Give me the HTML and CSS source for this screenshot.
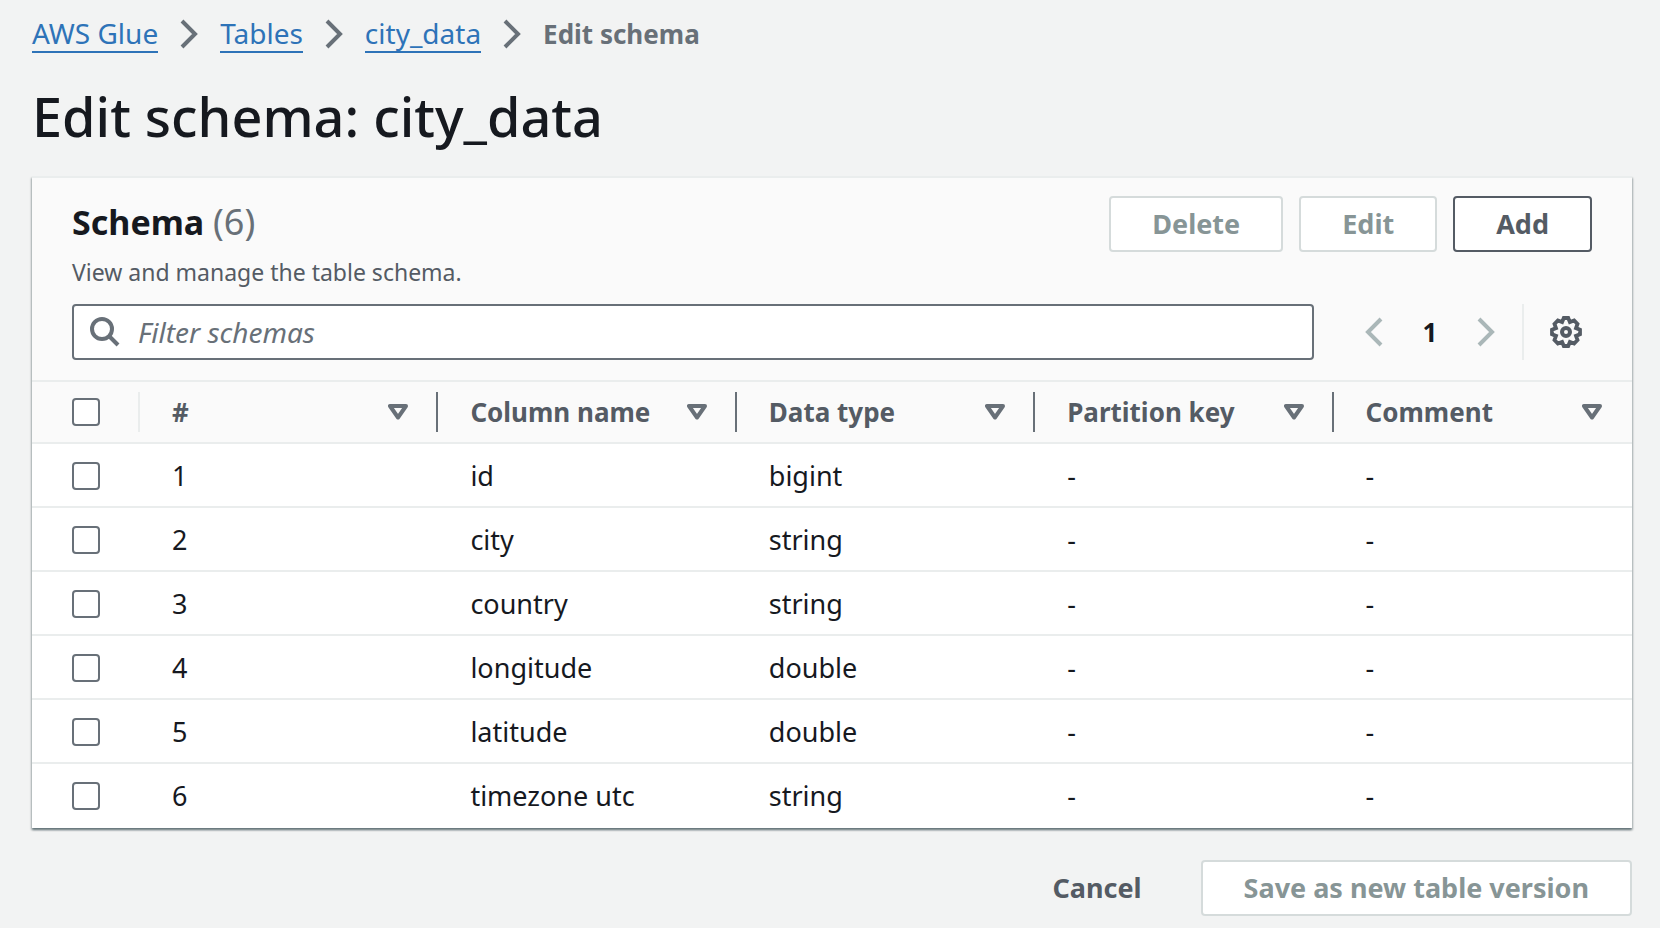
FILE: index.html
```
<!DOCTYPE html>
<html lang="en">
<head>
<meta charset="utf-8">
<title>Edit schema: city_data</title>
<link rel="stylesheet" href="styles.css">
</head>
<body>
<svg class="sprite" aria-hidden="true">
  <symbol id="chevron" viewBox="0 0 18 30"><path d="M2 2 15 15 2 28" fill="none" stroke="currentColor" stroke-width="4"/></symbol>
  <symbol id="sort" viewBox="0 0 20 16"><path d="M2 2H18L10 13.500Z" fill="none" stroke="currentColor" stroke-width="4" stroke-linejoin="round"/></symbol>
</svg>
<main class="page">
  <nav class="breadcrumbs" aria-label="Breadcrumbs">
    <a href="#">AWS Glue</a>
    <svg class="chevron"><use href="#chevron"/></svg>
    <a href="#">Tables</a>
    <svg class="chevron"><use href="#chevron"/></svg>
    <a href="#">city_data</a>
    <svg class="chevron"><use href="#chevron"/></svg>
    <span class="current">Edit schema</span>
  </nav>
  <h1 class="title">Edit schema: city_data</h1>

  <section class="panel">
    <header class="panel-header">
      <div class="heading-row">
        <div>
          <h2 class="heading">Schema <span class="count">(6)</span></h2>
          <p class="description">View and manage the table schema.</p>
        </div>
        <div class="actions">
          <button class="button" disabled>Delete</button>
          <button class="button" disabled>Edit</button>
          <button class="button">Add</button>
        </div>
      </div>
      <div class="tools">
        <label class="search">
          <svg class="search-icon" viewBox="0 0 30 30"><g fill="none" stroke="currentColor" stroke-width="4"><circle cx="12" cy="12" r="10"/><path d="M19 19 28 28"/></g></svg>
          <input type="text" placeholder="Filter schemas" aria-label="Filter schemas">
        </label>
        <div class="pagination">
          <button class="icon-button" disabled aria-label="Previous page"><svg class="chevron back"><use href="#chevron"/></svg></button>
          <button class="page-number">1</button>
          <button class="icon-button" disabled aria-label="Next page"><svg class="chevron"><use href="#chevron"/></svg></button>
        </div>
        <button class="settings" aria-label="Settings">
          <svg class="gear" viewBox="0 0 32 32"><g fill="none" stroke="currentColor" stroke-width="4"><circle cx="16" cy="16" r="4"/><path stroke-width="3.800" d="M13.800 2h4.400l1.700 4 4.200-1.500 3.400 3.400-1.500 4.200 4 1.700v4.400l-4 1.700 1.500 4.200-3.400 3.400-4.200-1.500-1.700 4h-4.400l-1.700-4-4.200 1.500-3.400-3.400 1.500-4.200-4-1.700v-4.400l4-1.700-1.500-4.200 3.400-3.400 4.200 1.500z"/></g></svg>
        </button>
      </div>
    </header>
    <table class="schema">
      <thead>
        <tr>
          <th class="select"><input type="checkbox" aria-label="Select all"></th>
          <th><div class="head">#<svg class="sort"><use href="#sort"/></svg></div></th>
          <th><div class="head">Column name<svg class="sort"><use href="#sort"/></svg></div></th>
          <th><div class="head">Data type<svg class="sort"><use href="#sort"/></svg></div></th>
          <th><div class="head">Partition key<svg class="sort"><use href="#sort"/></svg></div></th>
          <th><div class="head">Comment<svg class="sort"><use href="#sort"/></svg></div></th>
        </tr>
      </thead>
      <tbody>
        <tr><td class="select"><input type="checkbox" aria-label="Select id"></td><td>1</td><td>id</td><td>bigint</td><td>-</td><td>-</td></tr>
        <tr><td class="select"><input type="checkbox" aria-label="Select city"></td><td>2</td><td>city</td><td>string</td><td>-</td><td>-</td></tr>
        <tr><td class="select"><input type="checkbox" aria-label="Select country"></td><td>3</td><td>country</td><td>string</td><td>-</td><td>-</td></tr>
        <tr><td class="select"><input type="checkbox" aria-label="Select longitude"></td><td>4</td><td>longitude</td><td>double</td><td>-</td><td>-</td></tr>
        <tr><td class="select"><input type="checkbox" aria-label="Select latitude"></td><td>5</td><td>latitude</td><td>double</td><td>-</td><td>-</td></tr>
        <tr><td class="select"><input type="checkbox" aria-label="Select timezone utc"></td><td>6</td><td>timezone utc</td><td>string</td><td>-</td><td>-</td></tr>
      </tbody>
    </table>
  </section>

  <footer class="footer">
    <button class="button link">Cancel</button>
    <button class="button" disabled>Save as new table version</button>
  </footer>
</main>
</body>
</html>
```

FILE: styles.css
```
* { box-sizing: border-box; }
body {
  margin: 0;
  background: #f2f3f3;
  color: #16191f;
  font-family: "Noto Sans", "Open Sans", sans-serif;
  font-size: 27px;
  line-height: 40px;
}
button, input { font: inherit; color: inherit; }
button { padding: 0; border: 0; background: none; }
svg { display: block; flex: none; }
.sprite { position: absolute; width: 0; height: 0; }
.page { padding: 16px 28px 12px 32px; }

.breadcrumbs { display: flex; align-items: center; gap: 22px; height: 36px; color: #687078; font-size: 28px; }
.breadcrumbs a { color: #2e73b8; text-decoration: none; line-height: 35px; border-bottom: 2px solid #2e73b8; }
.breadcrumbs .current { font-size: 26px; font-weight: 700; }
.chevron { width: 18px; height: 30px; }
.back { transform: scaleX(-1); }

.title { margin: 28px 0 24px; font-size: 54px; line-height: 72px; font-weight: 500; }

.panel {
  background: #fff;
  border-top: 2px solid #eaeded;
  box-shadow: 0 2px 2px rgba(0, 28, 36, .35), 1px 2px 2px rgba(0, 28, 36, .2), -1px 2px 2px rgba(0, 28, 36, .2);
}
.panel-header { padding: 18px 40px 20px; background: #fafafa; border-bottom: 2px solid #eaeded; }
.heading-row { display: flex; justify-content: space-between; align-items: flex-start; }
.heading { margin: 4px 0 10px; font-size: 34px; line-height: 44px; font-weight: 700; }
.count { color: #687078; font-weight: 400; font-size: 36px; }
.description { margin: 0 0 14px; color: #545b64; font-size: 23px; line-height: 36px; }
.actions { display: flex; gap: 16px; }
.button {
  height: 56px;
  padding: 0 41px;
  border: 2px solid #545b64;
  border-radius: 4px;
  background: #fff;
  color: #545b64;
  font-weight: 700;
}
.button:disabled { border-color: #d5dbdb; color: #879596; }
.button.link { border-color: transparent; background: transparent; }

.tools { display: flex; align-items: center; }
.search {
  display: flex;
  align-items: center;
  flex: 1;
  gap: 18px;
  height: 56px;
  padding: 0 16px;
  border: 2px solid #687078;
  border-radius: 4px;
  background: #fff;
  color: #687078;
  font-size: 28px;
}
.search-icon { width: 30px; height: 30px; }
.search input { flex: 1; min-width: 0; padding: 0; border: 0; outline: 0; background: none; }
.search input::placeholder { color: #687078; opacity: 1; font-style: italic; }
.pagination { display: flex; align-items: center; justify-content: space-between; width: 130px; margin: 0 27px 0 51px; }
.icon-button { color: #aab7b8; }
.page-number { font-size: 26px; font-weight: 700; }
.settings { display: flex; align-items: center; height: 56px; padding: 0 10px 0 26px; border-left: 2px solid #eaeded; color: #545b64; }
.gear { width: 32px; height: 32px; }

.schema { width: 100%; table-layout: fixed; border-collapse: separate; border-spacing: 0; }
.schema th, .schema td { padding: 0 0 0 32px; text-align: left; }
.schema th { height: 62px; background: #fafafa; border-bottom: 2px solid #eaeded; color: #545b64; font-size: 26px; }
.schema td { height: 64px; padding-top: 2px; border-bottom: 2px solid #eaeded; }
.schema tbody tr:last-child td { border-bottom-color: transparent; }
.schema .select { width: 108px; padding-left: 40px; }
.head { display: flex; align-items: center; justify-content: space-between; height: 40px; padding-right: 28px; border-right: 2px solid #687078; }
.schema th:last-child .head { border-right-color: transparent; }
.schema th.select { background: linear-gradient(#eaeded, #eaeded) right center / 2px 40px no-repeat #fafafa; }
.sort { width: 20px; height: 16px; color: #687078; }
input[type="checkbox"] {
  appearance: none;
  display: block;
  width: 28px;
  height: 28px;
  margin: 0;
  border: 2px solid #687078;
  border-radius: 4px;
  background: #fff;
}
input[type="checkbox"]:checked { background: #0073bb; }

.footer { display: flex; justify-content: flex-end; gap: 16px; padding-top: 32px; }
```
